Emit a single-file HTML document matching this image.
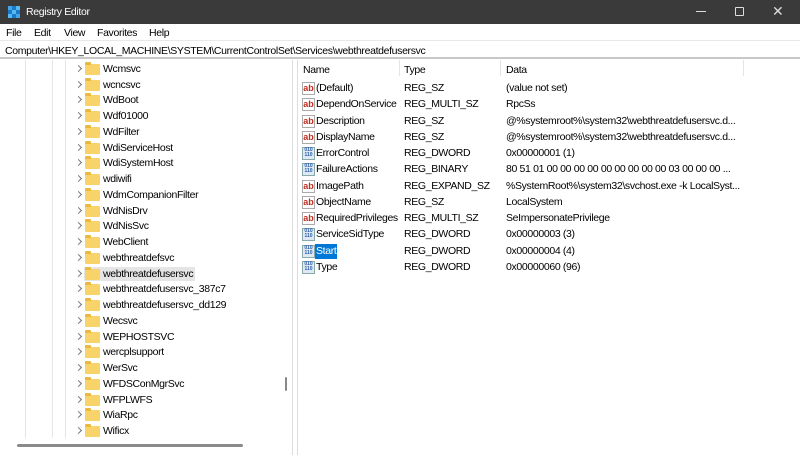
<!DOCTYPE html><html><head><style>
*{margin:0;padding:0;box-sizing:border-box}
body{width:800px;height:455px;overflow:hidden;background:#fff;font-family:"Liberation Sans",sans-serif;font-size:10.5px;letter-spacing:-0.35px;color:#000;position:relative}
.tb{position:absolute;left:0;top:0;width:800px;height:24px;background:#3a3a3a;color:#fff;font-size:10.5px}
.menu{position:absolute;top:24px;left:0;width:800px;height:17px;border-bottom:1px solid #e8e8e8}
.menu span{position:absolute;top:3px}
.addr{position:absolute;top:42px;left:0;width:800px;height:17px;border-bottom:2px solid #c8c8c8;padding:3px 0 0 5px;white-space:nowrap}
.tree{position:absolute;left:0;top:60px;width:293px;height:395px;border-right:1px solid #ddd;overflow:hidden}
.vl{position:absolute;top:0;height:378px;border-left:1px solid #e6e6e6}
.row{position:absolute;left:76px;height:15px;white-space:nowrap}
.chev{position:absolute;left:0;top:4px;width:5px;height:5px;border-right:1px solid #777;border-top:1px solid #777;transform:rotate(45deg)}
.fold{position:absolute;left:9px;top:2px;width:15px;height:11px;background:#f8d36a;border-radius:1px}
.fold:before{content:"";position:absolute;left:0;top:-2px;width:6px;height:3px;background:#e9b940;border-radius:1px 1px 0 0}
.row .t{position:absolute;left:25px;top:1px;padding:0 2px}
.right{position:absolute;left:297px;top:60px;width:503px;height:395px;border-left:1px solid #ddd}
.r{position:absolute;height:16px;white-space:nowrap;left:0;width:503px}
.r span{position:absolute;top:2px}
.ic{position:absolute;left:4px;top:2px;width:13px;height:13px;letter-spacing:0}
</style></head><body>
<div class="tb">
<div style="position:absolute;left:8px;top:6px;width:12px;height:12px;display:grid;grid-template-columns:repeat(3,4px);gap:0"><i style="background:#3fa7e8"></i><i style="background:#1e78c8"></i><i style="background:#56b9f2"></i><i style="background:#1e78c8"></i><i style="background:#56b9f2"></i><i style="background:#1e78c8"></i><i style="background:#56b9f2"></i><i style="background:#1e78c8"></i><i style="background:#3fa7e8"></i></div>
<span style="position:absolute;left:26px;top:6px">Registry Editor</span>
<span style="position:absolute;left:696px;top:11px;width:10px;border-top:1px solid #ddd"></span>
<span style="position:absolute;left:735px;top:7px;width:9px;height:9px;border:1px solid #ddd;border-radius:1px"></span>
<span style="position:absolute;left:772px;top:3px;font-size:14px;color:#ddd">✕</span>
</div>
<div class="menu"><span style="left:6px">File</span><span style="left:34px">Edit</span><span style="left:64px">View</span><span style="left:97px">Favorites</span><span style="left:149px">Help</span></div>
<div class="addr">Computer\HKEY_LOCAL_MACHINE\SYSTEM\CurrentControlSet\Services\webthreatdefusersvc</div>
<div class="tree">
<div class="vl" style="left:25px"></div><div class="vl" style="left:52px"></div><div class="vl" style="left:65px"></div>
<div style="position:absolute;left:84px;top:207px;width:111px;height:14px;background:#e5e5e5"></div>
<div id="rows"></div>
<div style="position:absolute;left:285px;top:317px;width:2px;height:14px;background:#888;border-radius:1px"></div>
<div style="position:absolute;left:17px;top:384px;width:226px;height:3px;background:#8a8a8a;border-radius:2px"></div>
</div>
<div class="right">
<div style="position:absolute;left:101px;top:0;height:16px;border-left:1px solid #e5e5e5"></div>
<div style="position:absolute;left:202px;top:0;height:16px;border-left:1px solid #e5e5e5"></div>
<div style="position:absolute;left:445px;top:0;height:16px;border-left:1px solid #e5e5e5"></div>
<div class="r" style="top:2px"><span style="left:5px">Name</span><span style="left:106px">Type</span><span style="left:208px">Data</span></div>
<div id="vals"></div>
</div>
<script>
var n=["Wcmsvc","wcncsvc","WdBoot","Wdf01000","WdFilter","WdiServiceHost","WdiSystemHost","wdiwifi","WdmCompanionFilter","WdNisDrv","WdNisSvc","WebClient","webthreatdefsvc","webthreatdefusersvc","webthreatdefusersvc_387c7","webthreatdefusersvc_dd129","Wecsvc","WEPHOSTSVC","wercplsupport","WerSvc","WFDSConMgrSvc","WFPLWFS","WiaRpc","Wificx"];
var h="";n.forEach(function(s,i){h+='<div class="row" style="top:'+(2+i*15.74)+'px"><i class="chev"></i><i class="fold"></i><span class="t">'+s+'</span></div>'});
document.getElementById("rows").innerHTML=h;
var v=[["ab","(Default)","REG_SZ","(value not set)"],["ab","DependOnService","REG_MULTI_SZ","RpcSs"],["ab","Description","REG_SZ","@%systemroot%\\system32\\webthreatdefusersvc.d..."],["ab","DisplayName","REG_SZ","@%systemroot%\\system32\\webthreatdefusersvc.d..."],["b","ErrorControl","REG_DWORD","0x00000001 (1)"],["b","FailureActions","REG_BINARY","80 51 01 00 00 00 00 00 00 00 00 00 03 00 00 00 ..."],["ab","ImagePath","REG_EXPAND_SZ","%SystemRoot%\\system32\\svchost.exe -k LocalSyst..."],["ab","ObjectName","REG_SZ","LocalSystem"],["ab","RequiredPrivileges","REG_MULTI_SZ","SeImpersonatePrivilege"],["b","ServiceSidType","REG_DWORD","0x00000003 (3)"],["b","Start","REG_DWORD","0x00000004 (4)"],["b","Type","REG_DWORD","0x00000060 (96)"]];
h="";v.forEach(function(r,i){var ic=r[0]=="ab"?'<span class="ic" style="border:1px solid #aaa;background:#fff;color:#c42b1c;font-size:9px;font-weight:bold;line-height:11px;text-align:center">ab</span>':'<span class="ic" style="border:1px solid #8aa;background:#dfe9f5;color:#2a5ea8;font-size:5px;line-height:5px;text-align:center;font-weight:bold">010<br>110</span>';
var sel=r[1]=="Start";
h+='<div class="r" style="top:'+(20+i*16.27)+'px">'+ic+'<span style="left:17px;padding:0 1px;'+(sel?'background:#0078d7;color:#fff;top:1px;height:15px;line-height:14px;':'')+'">'+r[1]+'</span><span style="left:106px">'+r[2]+'</span><span style="left:208px">'+r[3]+'</span></div>'});
document.getElementById("vals").innerHTML=h;
</script>
</body></html>
